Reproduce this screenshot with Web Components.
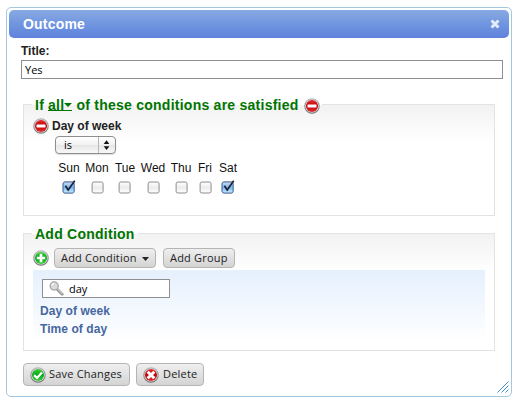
<!DOCTYPE html>
<html lang="en">
<head>
<meta charset="utf-8">
<title>Outcome</title>
<style>
html,body{margin:0;height:100%;background:#fff}
body{font:12px/14px "Liberation Sans",Arial,sans-serif;color:#222;display:flow-root;overflow:hidden}
</style>
</head>
<body>
<outcome-dialog></outcome-dialog>
<script>
const define = (name, html, setup) => {
  const t = document.createElement('template');
  t.innerHTML = '<style>:host,*{box-sizing:border-box}</style>' + html;
  customElements.define(name, class extends HTMLElement {
    constructor() {
      super();
      this.attachShadow({mode: 'open'}).append(t.content.cloneNode(true));
    }
    connectedCallback() { if (setup) setup(this, this.shadowRoot); }
  });
};

/* Round status badge: minus, plus, check or cross */
const glyphs = {
  minus: '<rect x="3.5" y="6.6" width="9" height="2.9" rx=".4" fill="#fff"/>',
  plus: '<path d="M8 3.8v8.4M3.8 8h8.4" stroke="#fff" stroke-width="2.7"/>',
  check: '<path d="M4.1 8.1l2.9 2.8 5-5.4" fill="none" stroke="#fff" stroke-width="2.2"/>',
  cross: '<path d="M4.7 4.7l6.6 6.6M11.3 4.7l-6.6 6.6" stroke="#fff" stroke-width="3"/>'
};
define('badge-icon', `<style>:host{display:block;flex:none;width:16px;height:16px}svg{display:block}</style><div></div>`,
  (el, root) => {
    const k = el.getAttribute('kind'), red = k === 'minus' || k === 'cross';
    const [a, b] = red ? ['#e0312e', '#c0000a'] : ['#3fce3c', '#06a81a'];
    root.querySelector('div').innerHTML = `<svg width="16" height="16" viewBox="0 0 16 16">
      <defs><linearGradient id="f" x2="0" y2="1"><stop stop-color="${a}"/><stop offset=".5" stop-color="${b}"/><stop offset="1" stop-color="${a}"/></linearGradient>
      <linearGradient id="r" x2="0" y2="1"><stop stop-color="#b8b8b8"/><stop offset="1" stop-color="#737373"/></linearGradient></defs>
      <circle cx="8" cy="8" r="7.2" fill="#e2e2e2" stroke="url(#r)" stroke-width="1.2"/>
      <circle cx="8" cy="8" r="6" fill="url(#f)"/>${glyphs[k]}</svg>`;
  });

define('push-button', `<style>
:host{display:flex;align-items:center;flex:none;height:20px;padding:0 6px;border:1px solid #b5b5b5;border-radius:4px;
background:linear-gradient(#efefef,#d4d4d4);font:11px/16px "Open Sans","Noto Sans",sans-serif;color:#222;white-space:nowrap;letter-spacing:.2px}
</style><slot></slot>`);

define('caret-down', `<style>:host{display:block;flex:none;width:8px;height:4px}svg{display:block;width:100%;height:100%}</style>
<svg viewBox="0 0 8 4" preserveAspectRatio="none"><path d="M0 0h8L4 4z" fill="currentColor"/></svg>`);

define('text-box', `<style>
:host{display:flex;align-items:center;height:19px;border:1px solid #8f8f92;background:#fff;padding:0 3px;
font:11px/16px "Open Sans","Noto Sans",sans-serif;color:#000}
</style><slot></slot>`);

define('search-icon', `<style>:host{display:block;width:15px;height:15px}svg{display:block}</style>
<svg width="15" height="15" viewBox="0 0 15 15">
<path d="M8.2 8.2l5 5" stroke="#8c8c8c" stroke-width="2.8" stroke-linecap="round"/>
<path d="M8.6 8.2l4.6 4.6" stroke="#d0d0d0" stroke-width="1.1" stroke-linecap="round"/>
<circle cx="5.2" cy="5" r="4.1" fill="#d9d9d9" stroke="#a2a2a2" stroke-width="1.2"/>
<path d="M2.8 4.5a2.6 2.6 0 0 1 2.4-2.2" fill="none" stroke="#fff" stroke-width="1.2"/></svg>`);

define('pop-select', `<style>
:host{display:flex;width:61px;height:18px;border:1px solid #8e8e8e;border-radius:4px;background:linear-gradient(#fff,#f1f1f1 50%,#e6e6e6 50%,#f8f8f8);
font:11px/16px "Open Sans","Noto Sans",sans-serif;color:#000;box-shadow:0 1px 1px #0002}
span{flex:1;padding-left:8px}
svg{display:block;width:17px;height:16px;border-left:1px solid #b6b6b6}
</style><span><slot></slot></span><svg viewBox="0 0 17 16"><path d="M5 7l3-4 3 4zM5 9.2h6l-3 4z" fill="#111"/></svg>`);

define('day-check', `<style>
:host{display:flex;flex-direction:column;align-items:center;flex:none;height:35px;color:#111}
svg{display:block;margin-top:6px;overflow:visible}
:host(:not([checked])) .on{display:none}
</style><slot></slot>
<svg width="13" height="13" viewBox="0 0 13 13">
<defs><linearGradient id="w" x2="0" y2="1"><stop stop-color="#fff"/><stop offset=".5" stop-color="#ececec"/><stop offset="1" stop-color="#fff"/></linearGradient>
<linearGradient id="b" x2="0" y2="1"><stop stop-color="#c9dff7"/><stop offset=".5" stop-color="#7db3ea"/><stop offset="1" stop-color="#c5f0ff"/></linearGradient></defs>
<rect x="1.1" y="1" width="11" height="11" rx="1.8" fill="url(#w)" stroke="#8d8d8d"/>
<g class="on"><rect x="1.1" y="1" width="11" height="11" rx="1.8" fill="url(#b)" stroke="#4e6fa8"/>
<path d="M3.4 4.8l2.8 4.2L12.7-.2" fill="none" stroke="#1b2036" stroke-width="1.7"/></g></svg>`);

define('group-box', `<style>
:host{display:block;border:1px solid #e3e3e3;background:linear-gradient(#f2f2f2,#fff 38px);padding:0 9px}
.legend{display:flex;align-items:center;width:max-content;height:18px;margin:-9px 0 0 -1px;padding:0 3px;
background:linear-gradient(#fff 9px,transparent 9px);font:bold 14px/18px "Liberation Sans",Arial,sans-serif;letter-spacing:.25px;color:#007500;white-space:nowrap}
</style><div class="legend"><slot name="legend"></slot></div><slot></slot>`);

define('title-bar', `<style>
:host{display:flex;justify-content:space-between;align-items:center;height:28px;border-radius:5px;padding:0 9px 0 14px;
background:linear-gradient(#87a9e2,#6c92df 60%,#5f81dc);color:#fff;font:bold 14px/16px "Liberation Sans",Arial,sans-serif;letter-spacing:.2px}
svg{display:block}
</style><slot></slot>
<svg width="10" height="10" viewBox="0 0 10 10"><path d="M1.5 1.5l7 7M8.5 1.5l-7 7" stroke="#e4ebfa" stroke-width="2.9"/></svg>`);

define('outcome-dialog', `<style>
:host{display:flex;flex-direction:column;width:506px;height:390px;margin:7px 0 0 6px;padding:2px;border:1px solid #a2c8e2;border-radius:5px;position:relative;background:#fff}
.label{font-weight:bold;margin:6px 0 2px 12px}
.title{margin:0 6px 0 12px;width:482px}
group-box{margin-left:14px;width:472px}
.first{height:112px;margin-top:25px}
.second{height:118px;margin-top:17px}
.first badge-icon[slot]{margin:1px -1px 0 5px}
.all{display:flex;align-items:center;height:18px;margin:0 4px;background:linear-gradient(#007500,#007500) 0 14px/100% 1px no-repeat}
.row{display:flex;align-items:center}
.cond{height:16px;margin-top:4px;font-weight:bold}
.cond badge-icon{margin:0 3px 0 0}
pop-select{margin:2px 0 0 22px}
.days{margin:7px 0 0 25px;display:grid;grid-template-columns:22px 34px 22px 34px 22px 26px 20px;justify-items:center}
.tools{gap:6px;margin-top:5px}
.tools push-button{margin-left:-1px}
.tools push-button + push-button{margin-left:1px}
.tools caret-down{margin:1px 0 0 5px;width:7px;height:4px}
.panel{height:72px;width:452px;margin-top:2px;padding:9px 9px 0;background:linear-gradient(#e5f0fd,#fff)}
.panel text-box{width:128px;padding-left:6px}
.panel search-icon{margin-right:5px}
.link{font-weight:bold;color:#4667a0;line-height:18px;margin-left:-2px;letter-spacing:.06px}
.link.f{margin-top:4px}
.actions{gap:6px;margin:12px 0 0 14px}
.actions push-button{height:23px}
.actions badge-icon{margin:0 3px 0 0}
.actions span{margin-top:-2px}
.grip{position:absolute;right:2px;bottom:3px}
</style>
<title-bar>Outcome</title-bar>
<div class="label">Title:</div>
<text-box class="title">Yes</text-box>
<group-box class="first">
  <span slot="legend">If</span><span slot="legend" class="all">all<caret-down></caret-down></span><span slot="legend">of these conditions are satisfied</span><badge-icon slot="legend" kind="minus"></badge-icon>
  <div class="row cond"><badge-icon kind="minus"></badge-icon>Day of week</div>
  <pop-select>is</pop-select>
  <div class="days"><day-check checked>Sun</day-check><day-check>Mon</day-check><day-check>Tue</day-check><day-check>Wed</day-check><day-check>Thu</day-check><day-check>Fri</day-check><day-check checked>Sat</day-check></div>
</group-box>
<group-box class="second">
  <span slot="legend">Add Condition</span>
  <div class="row tools"><badge-icon kind="plus"></badge-icon><push-button style="width:102px">Add Condition<caret-down></caret-down></push-button><push-button style="width:72px">Add Group</push-button></div>
  <div class="panel"><text-box><search-icon></search-icon>day</text-box>
    <div class="link f">Day of week</div><div class="link">Time of day</div></div>
</group-box>
<div class="row actions"><push-button style="width:107px"><badge-icon kind="check"></badge-icon><span>Save Changes</span></push-button><push-button style="width:68px"><badge-icon kind="cross" style="margin-right:4px"></badge-icon><span>Delete</span></push-button></div>
<svg class="grip" width="12" height="12" viewBox="0 0 12 12"><path d="M.5 11.5l11-11M4.5 11.5l7-7M8.5 11.5l3-3" stroke="#3f8fd0" stroke-width="1"/></svg>`);
</script>
</body>
</html>
